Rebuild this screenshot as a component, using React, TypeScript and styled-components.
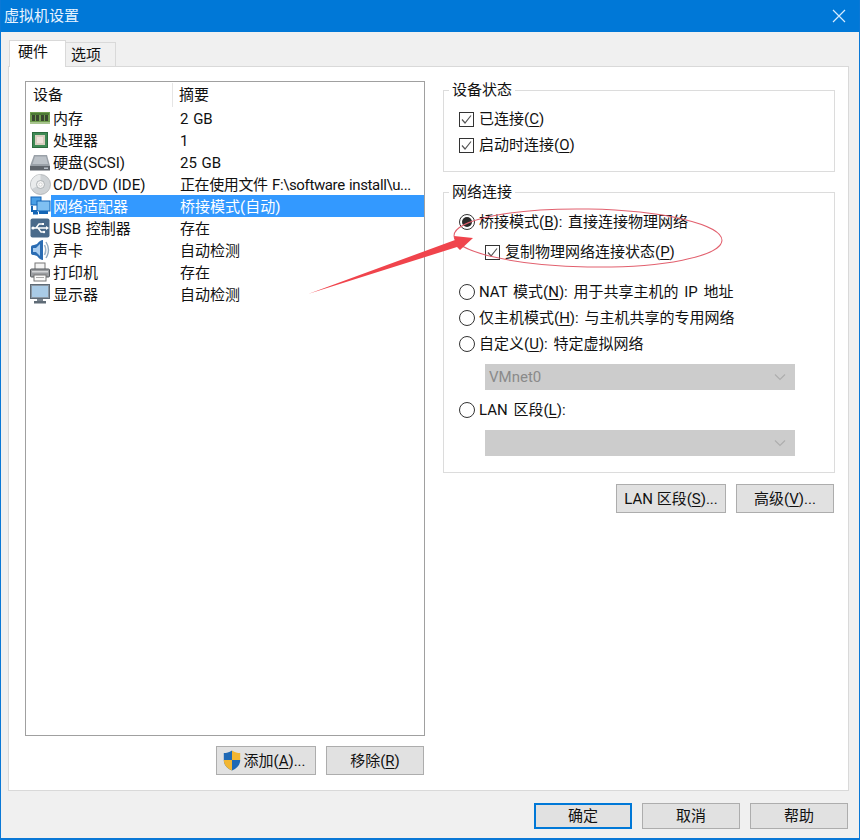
import React from "react";
import styled, { createGlobalStyle } from "styled-components";

const Global = createGlobalStyle`
  html, body { margin: 0; padding: 0; background: #fff; }
  body { font-family: Roboto, "Noto Sans CJK SC", sans-serif; font-size: 15px; color: #111; }
  * { box-sizing: border-box; }
`;

const Window = styled.div`
  position: relative;
  width: 860px;
  height: 840px;
  display: flex;
  flex-direction: column;
  background: #f0f0f0;
  border: solid #0a78d6;
  border-width: 0 1px 2px 1px;
  overflow: hidden;
`;

const TitleBar = styled.div`
  height: 32px;
  flex: none;
  margin: 0 -1px;
  padding: 0 14px 0 4px;
  display: flex;
  align-items: center;
  justify-content: space-between;
  background: #0078d7;
  color: #e8f4ff;
  line-height: 20px;
`;

const Body = styled.div`
  flex: 1;
  min-height: 0;
  display: flex;
  flex-direction: column;
  padding: 8px 10px 0 7px;
`;

const TabStrip = styled.div`
  height: 26px;
  flex: none;
  display: flex;
  align-items: flex-end;
  padding-left: 1px;
  position: relative;
  z-index: 1;
`;

const Tab = styled.div<{ $active?: boolean }>`
  width: ${(p) => (p.$active ? 57 : 50)}px;
  height: ${(p) => (p.$active ? 27 : 24)}px;
  margin-bottom: ${(p) => (p.$active ? -1 : 0)}px;
  display: flex;
  align-items: center;
  padding-left: ${(p) => (p.$active ? 8 : 5)}px;
  background: ${(p) => (p.$active ? "#fff" : "#f0f0f0")};
  border: 1px solid #d9d9d9;
  border-width: 1px 1px 0 ${(p) => (p.$active ? 1 : 0)}px;
  line-height: 20px;
  padding-bottom: ${(p) => (p.$active ? 4 : 0)}px;
`;

const Panel = styled.div`
  flex: 1;
  min-height: 0;
  background: #fff;
  border: 1px solid #d9d9d9;
  padding: 14px 13px 15px 16px;
  display: grid;
  grid-template-columns: 400px 392px;
  column-gap: 18px;
`;

const LeftColumn = styled.div`
  display: flex;
  flex-direction: column;
  min-height: 0;
`;

const DeviceList = styled.div`
  flex: 1;
  min-height: 0;
  border: 1px solid #a0a0a0;
  background: #fff;
`;

const ListHeader = styled.div`
  height: 25px;
  display: flex;
  align-items: center;
  line-height: 24px;
`;

const HeaderCell = styled.div<{ $first?: boolean }>`
  width: ${(p) => (p.$first ? "147px" : "auto")};
  padding-left: ${(p) => (p.$first ? 7 : 6)}px;
  border-right: ${(p) => (p.$first ? "1px solid #e5e5e5" : "none")};
`;

const Row = styled.div`
  height: 22px;
  display: flex;
  align-items: center;
`;

const IconSlot = styled.div`
  width: 25px;
  height: 22px;
  flex: none;
  display: flex;
  align-items: center;
  padding-left: 4px;
  position: relative;
  z-index: 1;
`;

const RowBody = styled.div<{ $selected?: boolean }>`
  flex: 1;
  height: 22px;
  padding-left: 2px;
  display: grid;
  grid-template-columns: 127px 1fr;
  align-items: center;
  line-height: 22px;
  padding-top: 1px;
  word-spacing: 1px;
  white-space: nowrap;
  background: ${(p) => (p.$selected ? "#3399ff" : "transparent")};
  color: ${(p) => (p.$selected ? "#fff" : "inherit")};
`;

const ValueText = styled.span<{ $tight?: boolean }>`
  letter-spacing: ${(p) => (p.$tight ? "-0.38px" : "normal")};
`;

const ButtonRow = styled.div<{ $top: number; $right: number }>`
  flex: none;
  display: flex;
  justify-content: flex-end;
  gap: 10px;
  margin-top: ${(p) => p.$top}px;
  padding-right: ${(p) => p.$right}px;
`;

const Button = styled.button<{ $width: number; $height?: number; $default?: boolean }>`
  width: ${(p) => p.$width}px;
  height: ${(p) => p.$height ?? 29}px;
  padding: 0;
  display: flex;
  align-items: center;
  justify-content: center;
  font: inherit;
  line-height: 20px;
  white-space: pre;
  color: #111;
  background: #e1e1e1;
  border: ${(p) => (p.$default ? "2px solid #0078d7" : "1px solid #adadad")};
`;

const ShieldSlot = styled.span`
  display: inline-flex;
  margin: 0 2px 0 -3px;
`;

const Accel = styled.span`
  text-decoration: underline;
  text-underline-offset: 2px;
  text-decoration-thickness: 1px;
`;

const RightColumn = styled.div`
  display: flex;
  flex-direction: column;
  margin-top: -1px;
`;

const Group = styled.fieldset<{ $height: number; $top?: number }>`
  margin: ${(p) => p.$top ?? 0}px 0 0;
  padding: 6px 0 0 15px;
  height: ${(p) => p.$height}px;
  min-width: 0;
  border: 1px solid #dcdcdc;
  display: block;
`;

const Legend = styled.legend`
  margin-left: -10px;
  padding: 0 3px;
  line-height: 21px;
  height: 20px;
`;

const OptionRow = styled.div<{ $indent?: boolean; $top?: number }>`
  height: 26px;
  display: flex;
  align-items: center;
  gap: 5px;
  margin-left: ${(p) => (p.$indent ? 26 : 0)}px;
  margin-top: ${(p) => p.$top ?? 0}px;
  line-height: 20px;
  word-spacing: 2px;
  white-space: pre;
`;

const CheckBox = styled.span`
  width: 15px;
  height: 15px;
  flex: none;
  border: 1px solid #333;
  background: #fff;
  display: flex;
  align-items: center;
  justify-content: center;
`;

const Radio = styled.span<{ $on?: boolean }>`
  width: 16px;
  height: 16px;
  flex: none;
  margin-left: -0.5px;
  margin-right: -0.5px;
  border: 1px solid #333;
  border-radius: 50%;
  background: #fff;
  display: flex;
  align-items: center;
  justify-content: center;
  &::after {
    content: "";
    display: ${(p) => (p.$on ? "block" : "none")};
    width: 10px;
    height: 10px;
    border-radius: 50%;
    background: #2a2a2a;
  }
`;

const Select = styled.div<{ $top: number }>`
  width: 310px;
  height: 26px;
  margin: ${(p) => p.$top}px 0 0 26px;
  padding: 0 9px 0 4px;
  background: #cccccc;
  color: #8a8a8a;
  display: flex;
  align-items: center;
  justify-content: space-between;
  line-height: 20px;
`;

const Footer = styled.div`
  height: 47px;
  flex: none;
  display: flex;
  justify-content: flex-end;
  gap: 10px;
  padding: 12px 1px 0 0;
`;

const Annotation = styled.svg`
  position: absolute;
  left: -1px;
  top: 0;
  z-index: 3;
  pointer-events: none;
`;

const Check = () => (
  <svg width="13" height="13" viewBox="0 0 13 13" fill="none">
    <path d="M2 6.5 L5 10 L11 2.5" stroke="#555" strokeWidth="1.2" />
  </svg>
);

const Chevron = () => (
  <svg width="12" height="8" viewBox="0 0 12 8" fill="none">
    <path d="M1 1.5 L6 6.5 L11 1.5" stroke="#aeaeae" strokeWidth="1.2" />
  </svg>
);

const CloseIcon = () => (
  <svg width="14" height="14" viewBox="0 0 14 14" fill="none">
    <path d="M1 1 L13 13 M13 1 L1 13" stroke="#d6ecff" strokeWidth="1.2" />
  </svg>
);

const MemoryIcon = () => (
  <svg width="20" height="14" viewBox="0 0 20 14">
    <rect x="0" y="1" width="20" height="12" fill="#6f9d4e" />
    <rect x="0" y="11" width="20" height="2" fill="#a8c58e" />
    <rect x="1" y="2" width="18" height="2" fill="#4c7a35" />
    <rect x="2" y="4" width="3" height="6" fill="#39472f" />
    <rect x="6" y="4" width="3" height="6" fill="#39472f" />
    <rect x="11" y="4" width="3" height="6" fill="#39472f" />
    <rect x="15" y="4" width="3" height="6" fill="#39472f" />
  </svg>
);

const CpuIcon = () => (
  <svg width="20" height="18" viewBox="0 0 20 18">
    <rect x="2" y="1" width="16" height="16" fill="#3f8a55" />
    <rect x="2.5" y="1.5" width="15" height="15" fill="none" stroke="#2c6b3e" />
    <rect x="5" y="4" width="10" height="10" fill="#d9cfc0" />
    <rect x="7" y="6" width="6" height="6" fill="#efe2dc" />
  </svg>
);

const DiskIcon = () => (
  <svg width="20" height="17" viewBox="0 0 20 17">
    <path d="M4 1 H17 L20 12 H0 Z" fill="#9aa1a8" />
    <path d="M5 2.5 H16 L18 10 H2.5 Z" fill="#bcc2c8" />
    <rect x="0" y="12" width="20" height="4.5" fill="#5f656c" />
    <rect x="14" y="13.5" width="4" height="1.5" fill="#b8c0c8" />
  </svg>
);

const CdIcon = () => (
  <svg width="21" height="21" viewBox="0 0 21 21">
    <circle cx="10.5" cy="10.5" r="10" fill="#cfd3d6" stroke="#a9adb0" strokeWidth="0.8" />
    <path d="M10.5 .5 A10 10 0 0 0 2 15 L10.5 10.5 Z" fill="#e9ebec" />
    <circle cx="10.5" cy="10.5" r="4" fill="#f4f4f4" stroke="#a0a4a8" strokeWidth="0.8" />
    <circle cx="10.5" cy="10.5" r="1.6" fill="#fff" stroke="#b5b5b5" strokeWidth="0.5" />
  </svg>
);

const NetworkIcon = () => (
  <svg width="21" height="20" viewBox="0 0 21 20">
    <rect x="1" y="1" width="10" height="8" fill="#4a9fe6" stroke="#1565b5" />
    <path d="M2 10 V15 H7" fill="none" stroke="#1565b5" strokeWidth="2" />
    <rect x="7" y="5" width="13" height="10" fill="#7fc0f2" stroke="#1565b5" />
    <rect x="9" y="15" width="9" height="3" fill="#1565b5" />
    <rect x="3" y="16" width="5" height="2.5" fill="#1565b5" />
  </svg>
);

const UsbIcon = () => (
  <svg width="20" height="20" viewBox="0 0 20 20">
    <rect x="0.5" y="0.5" width="19" height="19" rx="2" fill="#4a6a8a" />
    <path d="M2 10 H17 M6 10 L9 6 H12 M8 10 L11 14 H13" fill="none" stroke="#fff" strokeWidth="1.4" />
    <path d="M16 8 L19 10 L16 12 Z" fill="#fff" />
    <circle cx="3" cy="10" r="1.6" fill="#fff" />
    <rect x="12" y="5" width="2" height="2" fill="#fff" />
    <circle cx="14" cy="14" r="1.2" fill="#fff" />
  </svg>
);

const SoundIcon = () => (
  <svg width="20" height="22" viewBox="0 0 20 22">
    <path d="M1 8 Q1 6 4 6 L7 5 Q10 1 13 1 V21 Q10 21 7 17 L4 16 Q1 16 1 14 Z" fill="#2a6cb3" />
    <path d="M3 9 H6 L10 5 V17 L6 13 H3 Z" fill="#a9cdf0" />
    <path d="M14.5 6 Q17 11 14.5 16" fill="none" stroke="#9fb4c8" strokeWidth="1.6" />
    <path d="M16 3 Q21 11 16 19" fill="none" stroke="#8fa8bf" strokeWidth="1.4" />
  </svg>
);

const PrinterIcon = () => (
  <svg width="20" height="20" viewBox="0 0 20 20">
    <rect x="5" y="1" width="10" height="7" fill="#f4f4f4" stroke="#777" />
    <rect x="0.5" y="7" width="19" height="8" rx="1" fill="#9a9da1" stroke="#55585c" />
    <rect x="2" y="9" width="16" height="1.5" fill="#d4d6d8" />
    <rect x="4" y="13" width="12" height="6" fill="#fafafa" stroke="#777" />
    <rect x="6" y="15" width="8" height="1" fill="#aaa" />
  </svg>
);

const MonitorIcon = () => (
  <svg width="20" height="20" viewBox="0 0 20 20">
    <rect x="0.5" y="0.5" width="19" height="14" fill="#8b97a3" stroke="#5f6b76" />
    <rect x="2" y="2" width="16" height="11" fill="#a9cbe6" />
    <rect x="7" y="15" width="6" height="2" fill="#79848f" />
    <rect x="4" y="17" width="12" height="2.5" fill="#5f6b76" />
  </svg>
);

const ShieldIcon = () => (
  <svg width="18" height="21" viewBox="0 0 18 21">
    <path d="M9 0.5 C6 2.5 3.5 3 0.8 3 V10 C0.8 15 4 18.5 9 20.5 Z" fill="#1f69b5" />
    <path d="M9 0.5 C12 2.5 14.5 3 17.2 3 V10 H9 Z" fill="#f2b632" />
    <path d="M0.8 10 H9 V20.5 C4 18.5 0.8 15 0.8 10 Z" fill="#f2b632" />
    <path d="M9 10 H17.2 C17.2 15 14 18.5 9 20.5 Z" fill="#1f69b5" />
  </svg>
);

const devices = [
  { icon: <MemoryIcon />, name: "内存", value: "2 GB" },
  { icon: <CpuIcon />, name: "处理器", value: "1" },
  { icon: <DiskIcon />, name: "硬盘(SCSI)", value: "25 GB" },
  { icon: <CdIcon />, name: "CD/DVD (IDE)", value: "正在使用文件 F:\\software install\\u...", tight: true },
  { icon: <NetworkIcon />, name: "网络适配器", value: "桥接模式(自动)", selected: true },
  { icon: <UsbIcon />, name: "USB 控制器", value: "存在" },
  { icon: <SoundIcon />, name: "声卡", value: "自动检测" },
  { icon: <PrinterIcon />, name: "打印机", value: "存在" },
  { icon: <MonitorIcon />, name: "显示器", value: "自动检测" },
];

export default function App() {
  return (
    <Window>
      <Global />
      <TitleBar>
        <span>虚拟机设置</span>
        <CloseIcon />
      </TitleBar>
      <Body>
        <TabStrip>
          <Tab $active>硬件</Tab>
          <Tab>选项</Tab>
        </TabStrip>
        <Panel>
          <LeftColumn>
            <DeviceList>
              <ListHeader>
                <HeaderCell $first>设备</HeaderCell>
                <HeaderCell>摘要</HeaderCell>
              </ListHeader>
              {devices.map((d) => (
                <Row key={d.name}>
                  <IconSlot>{d.icon}</IconSlot>
                  <RowBody $selected={d.selected}>
                    <span>{d.name}</span>
                    <ValueText $tight={d.tight}>{d.value}</ValueText>
                  </RowBody>
                </Row>
              ))}
            </DeviceList>
            <ButtonRow $top={10} $right={1}>
              <Button $width={100}>
                <ShieldSlot>
                  <ShieldIcon />
                </ShieldSlot>
                添加(<Accel>A</Accel>)...
              </Button>
              <Button $width={98}>
                移除(<Accel>R</Accel>)
              </Button>
            </ButtonRow>
          </LeftColumn>
          <RightColumn>
            <Group $height={92}>
              <Legend>设备状态</Legend>
              <OptionRow>
                <CheckBox><Check /></CheckBox>
                <span>已连接(<Accel>C</Accel>)</span>
              </OptionRow>
              <OptionRow>
                <CheckBox><Check /></CheckBox>
                <span>启动时连接(<Accel>O</Accel>)</span>
              </OptionRow>
            </Group>
            <Group $height={291} $top={10}>
              <Legend>网络连接</Legend>
              <OptionRow $top={1}>
                <Radio $on />
                <span>桥接模式(<Accel>B</Accel>): 直接连接物理网络</span>
              </OptionRow>
              <OptionRow $indent $top={4}>
                <CheckBox><Check /></CheckBox>
                <span>复制物理网络连接状态(<Accel>P</Accel>)</span>
              </OptionRow>
              <OptionRow $top={14}>
                <Radio />
                <span>NAT 模式(<Accel>N</Accel>): 用于共享主机的 IP 地址</span>
              </OptionRow>
              <OptionRow>
                <Radio />
                <span>仅主机模式(<Accel>H</Accel>): 与主机共享的专用网络</span>
              </OptionRow>
              <OptionRow>
                <Radio />
                <span>自定义(<Accel>U</Accel>): 特定虚拟网络</span>
              </OptionRow>
              <Select $top={7}>
                <span>VMnet0</span>
                <Chevron />
              </Select>
              <OptionRow $top={7}>
                <Radio />
                <span>LAN 区段(<Accel>L</Accel>):</span>
              </OptionRow>
              <Select $top={7}>
                <span />
                <Chevron />
              </Select>
            </Group>
            <ButtonRow $top={11} $right={1}>
              <Button $width={110}>
                LAN 区段(<Accel>S</Accel>)...
              </Button>
              <Button $width={98}>
                高级(<Accel>V</Accel>)...
              </Button>
            </ButtonRow>
          </RightColumn>
        </Panel>
        <Footer>
          <Button $width={98} $height={26} $default>确定</Button>
          <Button $width={98} $height={26}>取消</Button>
          <Button $width={98} $height={26}>帮助</Button>
        </Footer>
      </Body>
      <Annotation width="860" height="840" viewBox="0 0 860 840">
        <ellipse cx="588" cy="238" rx="134" ry="29" fill="none" stroke="#e2606e" strokeWidth="1" transform="rotate(1 588 238)" />
        <polygon points="308,294 455,240 454,236 473,238 460,250 457,247" fill="#f0444c" />
      </Annotation>
    </Window>
  );
}
